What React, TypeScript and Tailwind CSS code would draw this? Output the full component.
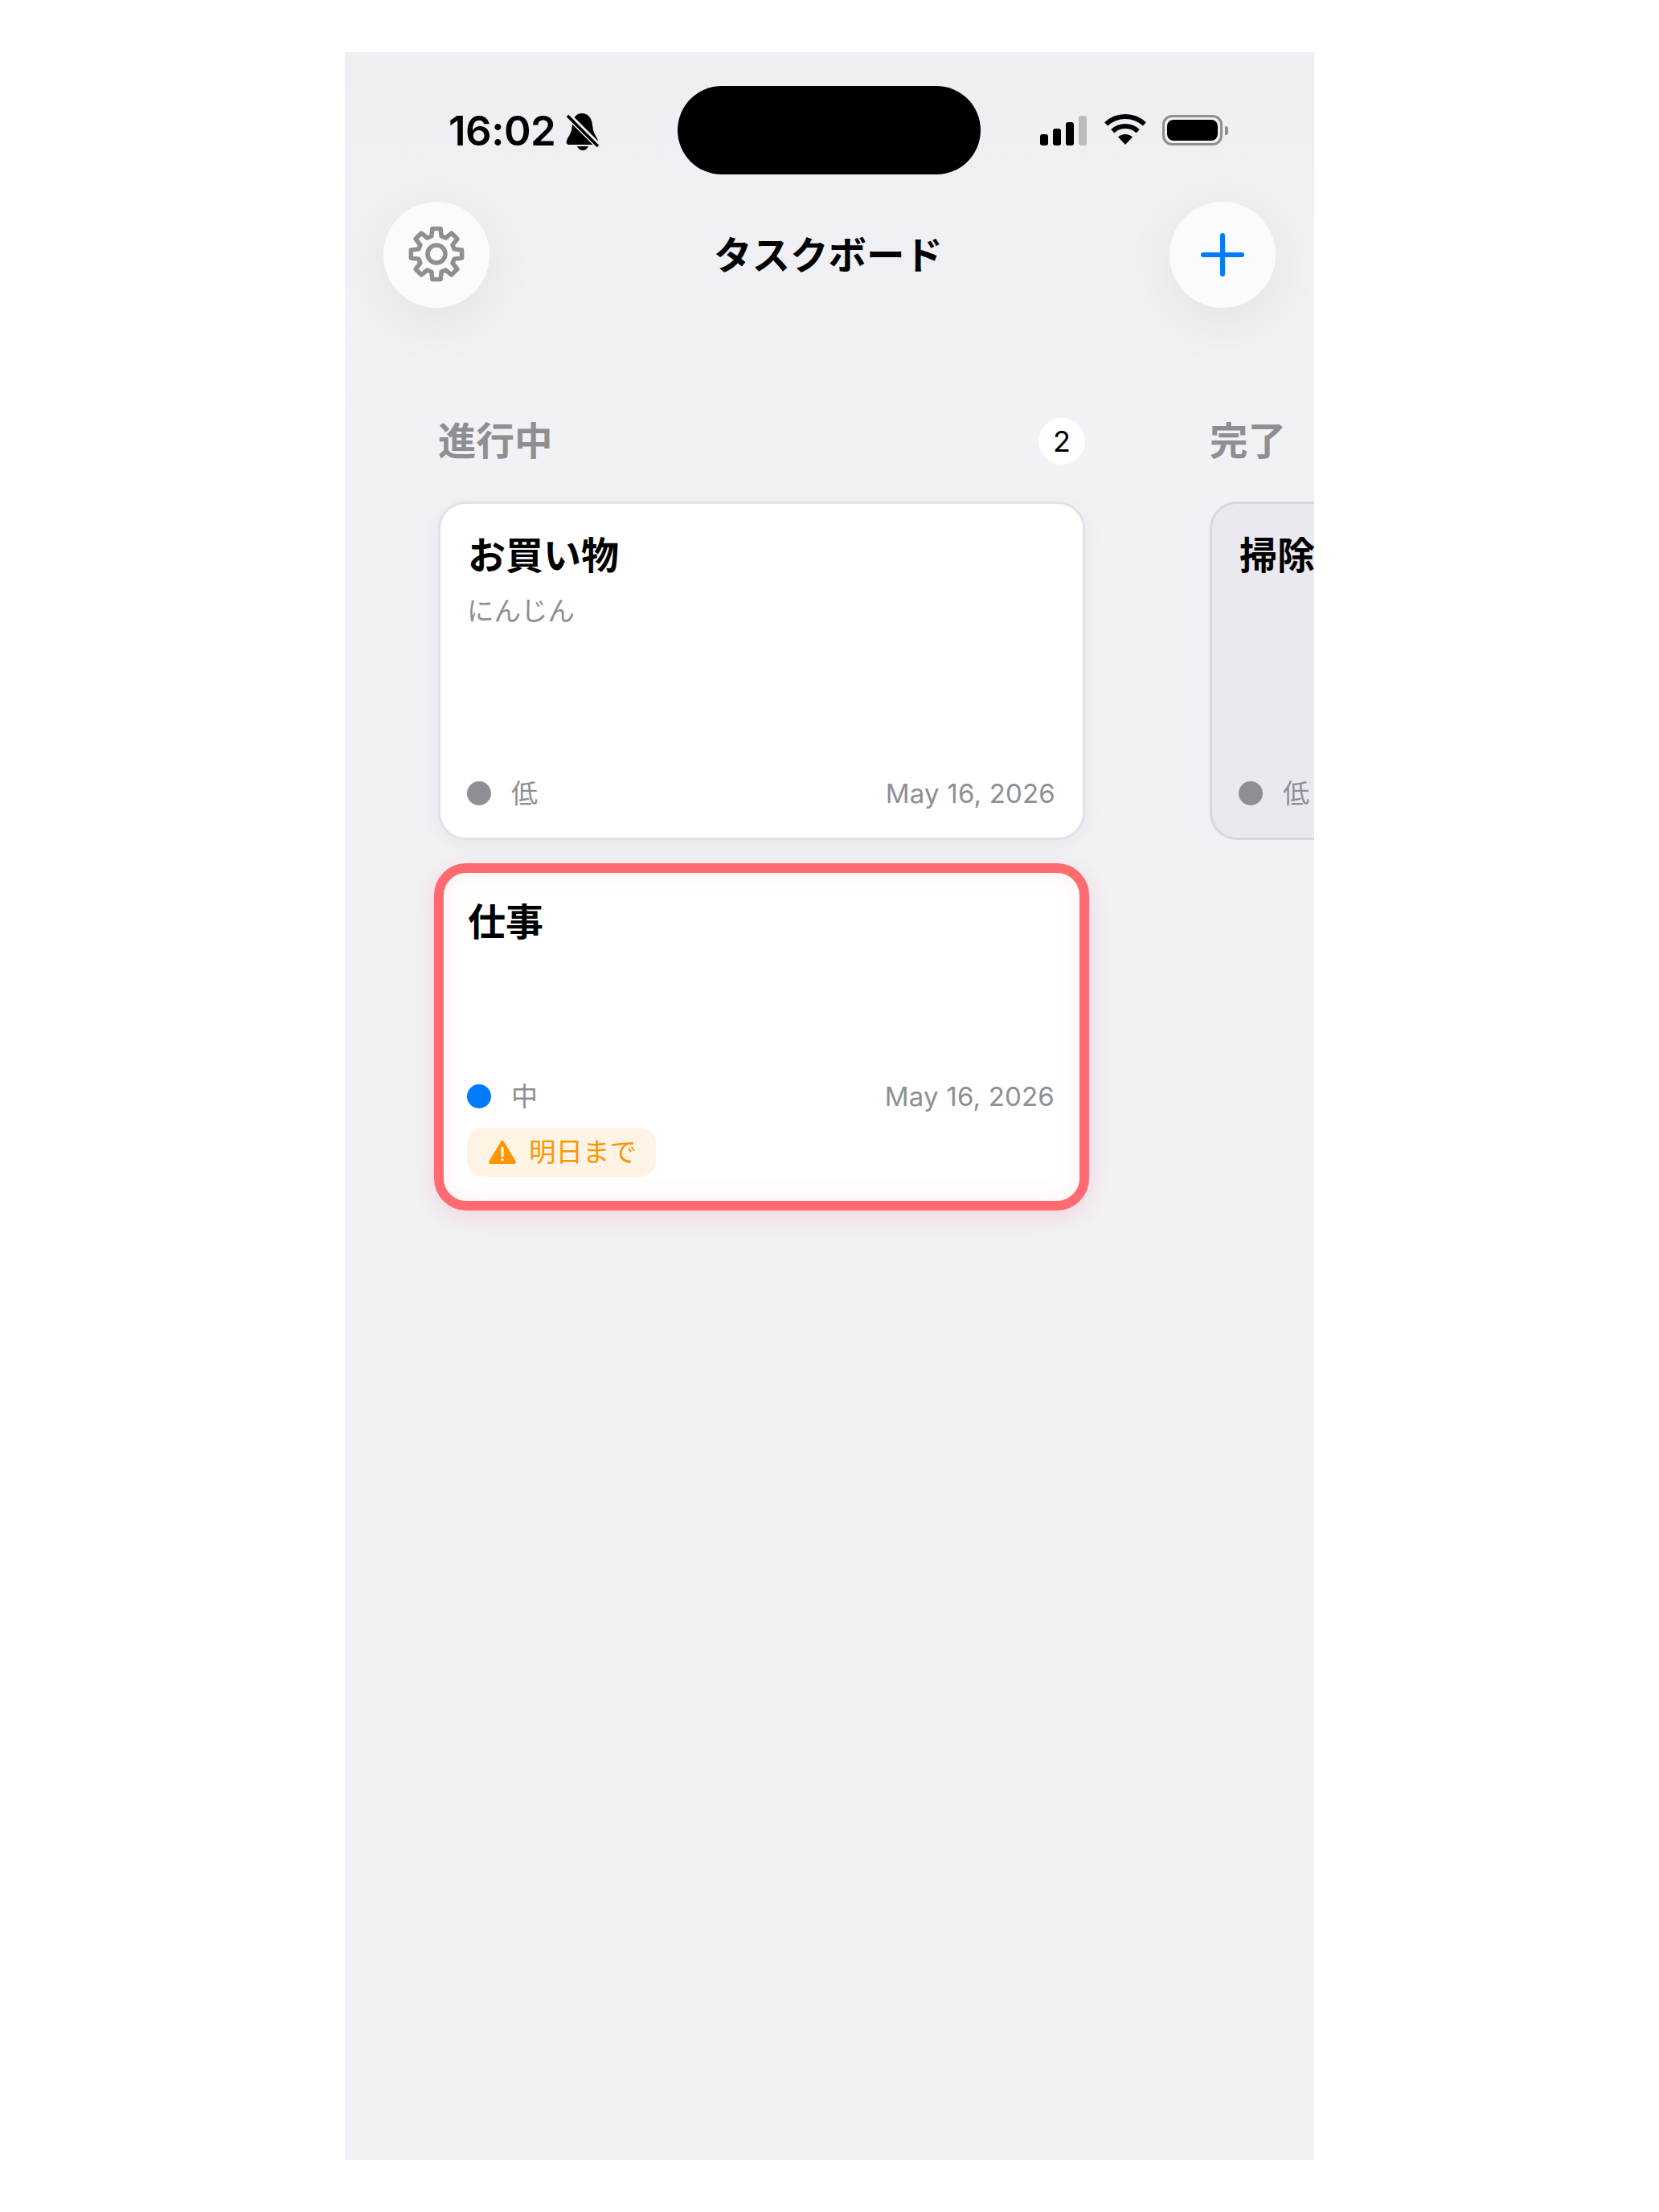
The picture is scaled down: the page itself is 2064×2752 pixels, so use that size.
import React from 'react'

const jp = '[font-family:Inter,"Noto_Sans_CJK_JP",sans-serif]'

// 8 toothed gear, center 48,47 in a 96 box
function gearPath() {
    const cx = 48
    const cy = 47
    const outer = 32
    const root = 23
    const step = (Math.PI * 2) / 8
    const pts: string[] = []
    for (let i = 0; i < 8; i++) {
        const a = i * step - Math.PI / 2
        const p = (r: number, d: number) =>
            `${(cx + r * Math.cos(a + d)).toFixed(2)} ${(cy + r * Math.sin(a + d)).toFixed(2)}`
        pts.push(`${i === 0 ? 'M' : 'L'}${p(root, -0.27)}`)
        pts.push(`L${p(outer, -0.16)}`)
        pts.push(`L${p(outer, 0.16)}`)
        pts.push(`L${p(root, 0.27)}`)
    }
    return pts.join(' ') + ' Z'
}

function GearIcon() {
    return (
        <svg viewBox="0 0 96 96" className="w-[96px] h-[96px]" fill="none" stroke="#8e8e93" strokeWidth="5.5" strokeLinejoin="round">
            <path d={gearPath()} />
            <circle cx="48" cy="47" r="11" />
        </svg>
    )
}

function BellOffIcon() {
    return (
        <svg viewBox="0 0 64 64" className="w-[64px] h-[64px] shrink-0">
            <path d="M32 11c7 0 12 5 13 14l1 7c1 5 5 9 6 13 1 3-1 5-3 5H16c-2 0-4-2-3-5 1-4 5-8 6-13l1-7c1-9 5-14 12-14z" fill="#000" />
            <path d="M26 52h14c-1 3-4 5-7 5s-6-2-7-5z" fill="#000" />
            <path d="M11 10 L55 54" stroke="#efeff3" strokeWidth="8" />
            <path d="M14 14 L52 52" stroke="#000" strokeWidth="3.6" />
        </svg>
    )
}

function WifiIcon() {
    return (
        <svg viewBox="0 0 70 54" className="w-[70px] h-[54px]" fill="none" stroke="#000">
            <path d="M10.1 20.4A35 35 0 0 1 57.9 20.4" strokeWidth="6" />
            <path d="M18.3 29.2A23 23 0 0 1 49.7 29.2" strokeWidth="6" />
            <path d="M34 46 L25 36.5A13 13 0 0 1 43 36.5Z" fill="#000" stroke="none" />
        </svg>
    )
}

function SignalIcon() {
    return (
        <div className="flex items-end gap-[6px] h-[38px]">
            <div className="w-[10px] h-[14px] rounded-[3px] bg-black" />
            <div className="w-[10px] h-[21px] rounded-[3px] bg-black" />
            <div className="w-[10px] h-[29px] rounded-[3px] bg-black" />
            <div className="w-[10px] h-[37px] rounded-[3px] bg-[#bcbcc0]" />
        </div>
    )
}

function BatteryIcon() {
    return (
        <div className="flex items-center">
            <div className="w-[75px] h-[38px] rounded-[12px] border-[3px] border-[#8e8e93] p-[3px]">
                <div className="w-full h-full rounded-[8px] bg-black" />
            </div>
            <div className="w-[4px] h-[11px] ml-[3px] rounded-r-[3px] bg-[#8e8e93]" />
        </div>
    )
}

function WarningIcon() {
    return (
        <svg viewBox="0 0 36 32" className="w-[36px] h-[32px] shrink-0">
            <path d="M18 3 L33 28 H3 Z" fill="#ff9500" stroke="#ff9500" strokeWidth="4" strokeLinejoin="round" />
            <path d="M18 10 V20" stroke="#fff" strokeWidth="3" strokeLinecap="round" />
            <circle cx="18" cy="25" r="1.8" fill="#fff" />
        </svg>
    )
}

function Footer({ dot, label, date }: { dot: string; label: string; date?: string }) {
    return (
        <div className="flex items-center justify-between h-[40px]">
            <div className="flex items-center gap-[25px]">
                <div className={`w-[30px] h-[30px] rounded-full ${dot}`} />
                <span className="text-[33px] leading-[40px] text-[#8e8e93] whitespace-nowrap">{label}</span>
            </div>
            {date && <span className="text-[33px] leading-[40px] tracking-[0.2px] text-[#8e8e93]">{date}</span>}
        </div>
    )
}

export default function App() {
    return (
        <div className={`min-h-[2752px] bg-white pt-[65px] pl-[429px] ${jp}`}>
            <div className="w-[1206px] h-[2622px] bg-[#f1f1f6] overflow-hidden">
                <div className="bg-linear-to-b from-[#efeff3] to-[#f1f1f6] h-[480px]">
                    {/* status bar */}
                    <div className="flex items-center h-[110px] translate-y-[42px]">
                        <div className="flex items-center ml-[129px] w-[285px]">
                            <span className="text-[51px] font-semibold text-black leading-none tracking-[-0.5px]">16:02</span>
                            <div className="ml-[1px]"><BellOffIcon /></div>
                        </div>
                        <div className="w-[377px] h-[110px] rounded-[55px] bg-black" />
                        <div className="flex items-center ml-[74px]">
                            <SignalIcon />
                            <div className="ml-[14px] mr-[10px] -mt-[2px]"><WifiIcon /></div>
                            <BatteryIcon />
                        </div>
                    </div>

                    {/* header */}
                    <div className="flex items-center justify-between pl-[48px] pr-[48px] mt-[76px]">
                        <button className="w-[132px] h-[132px] rounded-full bg-[#fbfbff] flex items-center justify-center shadow-[0_20px_70px_rgba(0,0,0,0.06)]">
                            <GearIcon />
                        </button>
                        <h1 className="text-[47.5px] font-bold text-black leading-none mr-[3px] translate-y-[1px]">タスクボード</h1>
                        <button className="w-[132px] h-[132px] rounded-full bg-[#fbfbff] flex items-center justify-center shadow-[0_20px_70px_rgba(0,0,0,0.06)]">
                            <svg viewBox="0 0 54 54" className="w-[54px] h-[54px]" fill="none" stroke="#007aff" strokeWidth="6" strokeLinecap="round">
                                <path d="M27 3V51M3 27H51" />
                            </svg>
                        </button>
                    </div>
                </div>

                {/* board */}
                <div className="flex gap-[155px] pl-[116px] -mt-[25px]">
                    <div className="w-[805px] shrink-0">
                        <div className="flex items-center justify-between h-[57px]">
                            <h2 className="text-[47.5px] font-bold text-[#8e8e93] leading-none">進行中</h2>
                            <div className="w-[58px] h-[58px] -ml-[1px] rounded-full bg-white flex items-center justify-center text-[36px] text-black">2</div>
                        </div>

                        <div className="mt-[47px] h-[421px] rounded-[34px] border-[3px] border-[#e2e2e6] bg-white pt-[36px] pb-[35px] pl-[33px] pr-[34px] flex flex-col shadow-[0_6px_28px_rgba(0,0,0,0.05)]">
                            <h3 className="text-[47px] font-bold text-black leading-[56px] pl-[1px]">お買い物</h3>
                            <p className="mt-[18px] text-[33.5px] leading-[46px] text-[#8e8e93]">にんじん</p>
                            <div className="mt-auto">
                                <Footer dot="bg-[#8e8e93]" label="低" date="May 16, 2026" />
                            </div>
                        </div>

                        <div className="mt-[29px] -mx-[5px] h-[432px] rounded-[40px] border-[12px] border-[#ff6b70] bg-white pt-[33px] pb-[30px] pl-[29px] pr-[31px] flex flex-col shadow-[0_8px_28px_rgba(255,59,48,0.14),inset_0_0_30px_rgba(255,107,112,0.1)]">
                            <h3 className="text-[47px] font-bold text-black leading-[56px] pl-[1px]">仕事</h3>
                            <div className="mt-auto">
                                <Footer dot="bg-[#007aff]" label="中" date="May 16, 2026" />
                                <div className="mt-[19px] w-[235px] h-[61px] rounded-[20px] bg-[#fff3e6] flex items-center gap-[15px] pl-[26px]">
                                    <WarningIcon />
                                    <span className="text-[33.5px] leading-none text-[#ff9500] whitespace-nowrap">明日まで</span>
                                </div>
                            </div>
                        </div>
                    </div>

                    <div className="w-[805px] shrink-0">
                        <div className="flex items-center h-[57px]">
                            <h2 className="text-[47.5px] font-bold text-[#8e8e93] leading-none">完了</h2>
                        </div>
                        <div className="mt-[47px] h-[421px] rounded-[34px] border-[3px] border-[#d8d8dc] bg-[#e9e9ef] pt-[36px] pb-[35px] pl-[33px] pr-[34px] flex flex-col">
                            <h3 className="text-[47px] font-bold text-black leading-[56px] pl-[1px]">掃除</h3>
                            <div className="mt-auto">
                                <Footer dot="bg-[#8e8e93]" label="低" />
                            </div>
                        </div>
                    </div>
                </div>
            </div>
        </div>
    )
}
